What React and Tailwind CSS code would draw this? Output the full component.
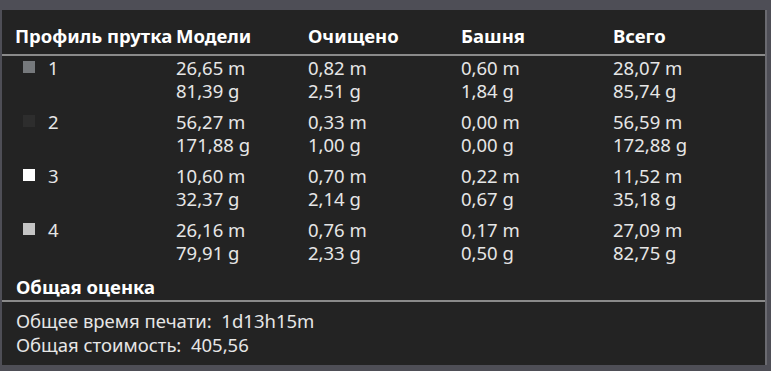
import React from 'react';

const rows = [
  { id: '1', color: 'bg-[#76797c]', model: ['26,65 m', '81,39 g'], flushed: ['0,82 m', '2,51 g'], tower: ['0,60 m', '1,84 g'], total: ['28,07 m', '85,74 g'] },
  { id: '2', color: 'bg-[#2d2d2d]', model: ['56,27 m', '171,88 g'], flushed: ['0,33 m', '1,00 g'], tower: ['0,00 m', '0,00 g'], total: ['56,59 m', '172,88 g'] },
  { id: '3', color: 'bg-white', model: ['10,60 m', '32,37 g'], flushed: ['0,70 m', '2,14 g'], tower: ['0,22 m', '0,67 g'], total: ['11,52 m', '35,18 g'] },
  { id: '4', color: 'bg-[#c4c4c4]', model: ['26,16 m', '79,91 g'], flushed: ['0,76 m', '2,33 g'], tower: ['0,17 m', '0,50 g'], total: ['27,09 m', '82,75 g'] },
];

const Cell = ({ lines }) => (
  <div className="flex flex-col leading-[23px]">
    {lines.map((l) => (
      <span key={l}>{l}</span>
    ))}
  </div>
);

const App = () => {
  return (
    <div className="w-[771px] h-[371px] bg-[#4e4e56] pt-[10px] pl-[2px] pr-[4px] pb-[6px] font-['Noto_Sans',sans-serif]">
      <div className="h-full bg-[#232323] border-r-2 border-[#6a6a70] text-[18.5px] text-[#e6e6e6]">
        {/* Header */}
        <div className="grid grid-cols-[161px_132px_153px_152px_1fr] pl-[13px] pt-[14px] pb-[7px] leading-[23px] font-bold text-white border-b-2 border-[#8a8a8a]">
          <span className="whitespace-nowrap">Профиль прутка</span>
          <span>Модели</span>
          <span>Очищено</span>
          <span>Башня</span>
          <span>Всего</span>
        </div>

        {/* Filament rows */}
        <div>
          {rows.map((r) => (
            <div key={r.id} className="grid grid-cols-[161px_132px_153px_152px_1fr] pl-[13px] pb-[8px]">
              <div className="flex items-start gap-[13px] pl-[8px] leading-[23px]">
                <span className={`w-[12px] h-[12px] mt-[5px] ${r.color}`} />
                <span>{r.id}</span>
              </div>
              <Cell lines={r.model} />
              <Cell lines={r.flushed} />
              <Cell lines={r.tower} />
              <Cell lines={r.total} />
            </div>
          ))}
        </div>

        {/* Summary */}
        <div className="pl-[14px] pt-[3px] pb-[2px] leading-[23px] font-bold text-white border-b-2 border-[#8a8a8a]">
          Общая оценка
        </div>
        <div className="pl-[14px] pt-[7px] leading-[24px]">
          <div>Общее время печати:&nbsp; 1d13h15m</div>
          <div>Общая стоимость:&nbsp; 405,56</div>
        </div>
      </div>
    </div>
  );
};

export default App;
